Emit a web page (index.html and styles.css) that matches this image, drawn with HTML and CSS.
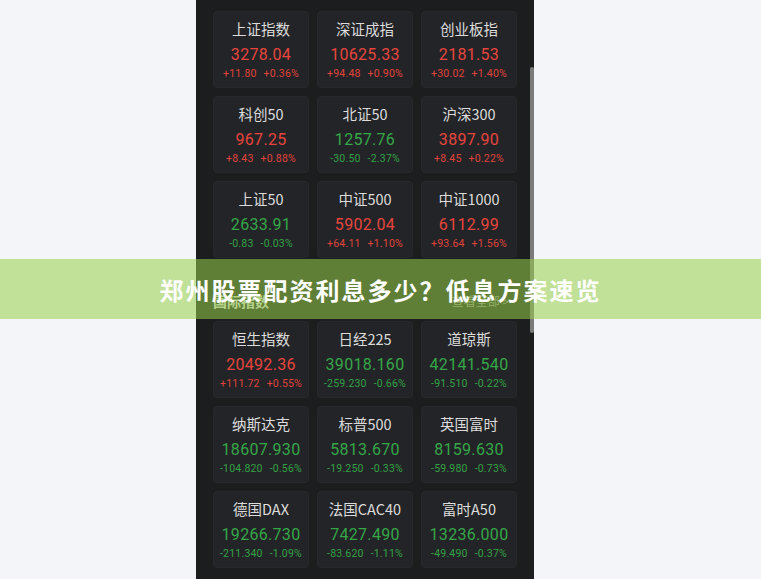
FILE: index.html
```html
<!DOCTYPE html>
<html lang="zh">
<head>
<meta charset="utf-8">
<title>指数</title>
<link rel="stylesheet" href="styles.css">
</head>
<body>
<div class="page">
  <div class="phone">
    <div class="grid grid-top">
      <div class="card"><div class="name">上证指数</div><div class="value up">3278.04</div><div class="chg up"><span>+11.80</span><span>+0.36%</span></div></div>
      <div class="card"><div class="name">深证成指</div><div class="value up">10625.33</div><div class="chg up"><span>+94.48</span><span>+0.90%</span></div></div>
      <div class="card"><div class="name">创业板指</div><div class="value up">2181.53</div><div class="chg up"><span>+30.02</span><span>+1.40%</span></div></div>
      <div class="card"><div class="name">科创50</div><div class="value up">967.25</div><div class="chg up"><span>+8.43</span><span>+0.88%</span></div></div>
      <div class="card"><div class="name">北证50</div><div class="value down">1257.76</div><div class="chg down"><span>-30.50</span><span>-2.37%</span></div></div>
      <div class="card"><div class="name">沪深300</div><div class="value up">3897.90</div><div class="chg up"><span>+8.45</span><span>+0.22%</span></div></div>
      <div class="card"><div class="name">上证50</div><div class="value down">2633.91</div><div class="chg down"><span>-0.83</span><span>-0.03%</span></div></div>
      <div class="card"><div class="name">中证500</div><div class="value up">5902.04</div><div class="chg up"><span>+64.11</span><span>+1.10%</span></div></div>
      <div class="card"><div class="name">中证1000</div><div class="value up">6112.99</div><div class="chg up"><span>+93.64</span><span>+1.56%</span></div></div>
    </div>
    <div class="section-head">
      <span class="section-title">国际指数</span>
      <span class="section-more">查看全部 &gt;</span>
    </div>
    <div class="grid">
      <div class="card"><div class="name">恒生指数</div><div class="value up">20492.36</div><div class="chg up"><span>+111.72</span><span>+0.55%</span></div></div>
      <div class="card"><div class="name">日经225</div><div class="value down">39018.160</div><div class="chg down"><span>-259.230</span><span>-0.66%</span></div></div>
      <div class="card"><div class="name">道琼斯</div><div class="value down">42141.540</div><div class="chg down"><span>-91.510</span><span>-0.22%</span></div></div>
      <div class="card"><div class="name">纳斯达克</div><div class="value down">18607.930</div><div class="chg down"><span>-104.820</span><span>-0.56%</span></div></div>
      <div class="card"><div class="name">标普500</div><div class="value down">5813.670</div><div class="chg down"><span>-19.250</span><span>-0.33%</span></div></div>
      <div class="card"><div class="name">英国富时</div><div class="value down">8159.630</div><div class="chg down"><span>-59.980</span><span>-0.73%</span></div></div>
      <div class="card"><div class="name">德国DAX</div><div class="value down">19266.730</div><div class="chg down"><span>-211.340</span><span>-1.09%</span></div></div>
      <div class="card"><div class="name">法国CAC40</div><div class="value down">7427.490</div><div class="chg down"><span>-83.620</span><span>-1.11%</span></div></div>
      <div class="card"><div class="name">富时A50</div><div class="value down">13236.000</div><div class="chg down"><span>-49.490</span><span>-0.37%</span></div></div>
    </div>
    <div class="scrollbar"></div>
  </div>
  <div class="banner">郑州股票配资利息多少？低息方案速览</div>
</div>
</body>
</html>
```

FILE: styles.css
```css
* { box-sizing: border-box; }
html, body {
  margin: 0;
  padding: 0;
  width: 761px;
  height: 579px;
  overflow: hidden;
  background: #f4f5f9;
  font-family: "Noto Sans CJK SC", "Noto Sans", sans-serif;
}
.page {
  position: relative;
  width: 761px;
  height: 579px;
  padding-left: 196px;
}
.phone {
  position: relative;
  width: 338px;
  height: 579px;
  background: #1c1d1f;
  padding: 11px 17px 0 17px;
}
.grid {
  display: grid;
  grid-template-columns: 96px 96px 96px;
  column-gap: 8px;
  row-gap: 8px;
}
.card {
  height: 77px;
  background: #232427;
  border: 1px solid #27282b;
  border-radius: 4px;
  display: flex;
  flex-direction: column;
  align-items: center;
  padding-top: 7px;
}
.name {
  font-size: 14.5px;
  line-height: 20px;
  color: #dcdcdc;
  height: 20px;
}
.value {
  margin-top: 6px;
  font-family: Roboto, "Noto Sans", sans-serif;
  font-weight: 400;
  font-size: 16px;
  line-height: 20px;
  letter-spacing: 0.3px;
}
.chg {
  margin-top: 0px;
  font-family: Roboto, "Noto Sans", sans-serif;
  font-size: 10.5px;
  line-height: 18px;
  display: flex;
  gap: 7px;
  letter-spacing: 0.2px;
}
.up { color: #e8443d; }
.chg.up { color: #e0433c; }
.down { color: #35a747; }
.chg.down { color: #33a245; }
.section-head {
  height: 63px;
  display: flex;
  justify-content: space-between;
  align-items: flex-end;
  padding: 0 4px 12px 0;
}
.section-title {
  font-size: 14px;
  line-height: 16px;
  font-weight: bold;
  color: #d8d8d8;
}
.section-more {
  font-size: 12px;
  line-height: 16px;
  color: #8e8e8e;
  margin-right: 4px;
}
.scrollbar {
  position: absolute;
  right: 0;
  top: 67px;
  width: 4px;
  height: 266px;
  background: #7b7b7b;
  border-radius: 2px;
}
.banner {
  position: absolute;
  left: 0;
  top: 259px;
  width: 761px;
  height: 60px;
  background: rgba(152, 205, 72, 0.55);
  color: #ffffff;
  font-weight: bold;
  font-size: 24px;
  letter-spacing: 2px;
  display: flex;
  align-items: center;
  justify-content: center;
}
```
